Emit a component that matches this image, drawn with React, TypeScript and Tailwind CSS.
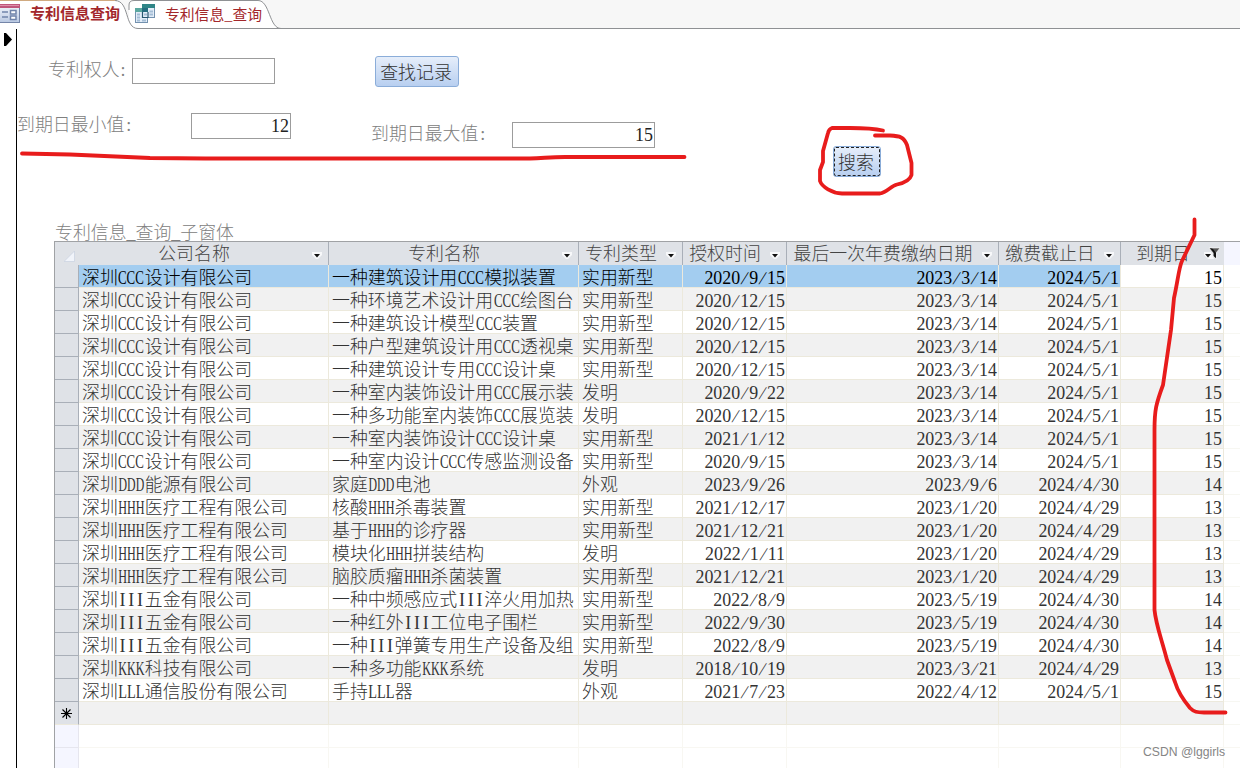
import React from "react";

const ROWS: string[][] = [
  ["深圳CCC设计有限公司", "一种建筑设计用CCC模拟装置", "实用新型", "2020/9/15", "2023/3/14", "2024/5/1", "15"],
  ["深圳CCC设计有限公司", "一种环境艺术设计用CCC绘图台", "实用新型", "2020/12/15", "2023/3/14", "2024/5/1", "15"],
  ["深圳CCC设计有限公司", "一种建筑设计模型CCC装置", "实用新型", "2020/12/15", "2023/3/14", "2024/5/1", "15"],
  ["深圳CCC设计有限公司", "一种户型建筑设计用CCC透视桌", "实用新型", "2020/12/15", "2023/3/14", "2024/5/1", "15"],
  ["深圳CCC设计有限公司", "一种建筑设计专用CCC设计桌", "实用新型", "2020/12/15", "2023/3/14", "2024/5/1", "15"],
  ["深圳CCC设计有限公司", "一种室内装饰设计用CCC展示装", "发明", "2020/9/22", "2023/3/14", "2024/5/1", "15"],
  ["深圳CCC设计有限公司", "一种多功能室内装饰CCC展览装", "发明", "2020/12/15", "2023/3/14", "2024/5/1", "15"],
  ["深圳CCC设计有限公司", "一种室内装饰设计CCC设计桌", "实用新型", "2021/1/12", "2023/3/14", "2024/5/1", "15"],
  ["深圳CCC设计有限公司", "一种室内设计CCC传感监测设备", "实用新型", "2020/9/15", "2023/3/14", "2024/5/1", "15"],
  ["深圳DDD能源有限公司", "家庭DDD电池", "外观", "2023/9/26", "2023/9/6", "2024/4/30", "14"],
  ["深圳HHH医疗工程有限公司", "核酸HHH杀毒装置", "实用新型", "2021/12/17", "2023/1/20", "2024/4/29", "13"],
  ["深圳HHH医疗工程有限公司", "基于HHH的诊疗器", "实用新型", "2021/12/21", "2023/1/20", "2024/4/29", "13"],
  ["深圳HHH医疗工程有限公司", "模块化HHH拼装结构", "发明", "2022/1/11", "2023/1/20", "2024/4/29", "13"],
  ["深圳HHH医疗工程有限公司", "脑胶质瘤HHH杀菌装置", "实用新型", "2021/12/21", "2023/1/20", "2024/4/29", "13"],
  ["深圳III五金有限公司", "一种中频感应式III淬火用加热", "实用新型", "2022/8/9", "2023/5/19", "2024/4/30", "14"],
  ["深圳III五金有限公司", "一种红外III工位电子围栏", "实用新型", "2022/9/30", "2023/5/19", "2024/4/30", "14"],
  ["深圳III五金有限公司", "一种III弹簧专用生产设备及组", "实用新型", "2022/8/9", "2023/5/19", "2024/4/30", "14"],
  ["深圳KKK科技有限公司", "一种多功能KKK系统", "发明", "2018/10/19", "2023/3/21", "2024/4/29", "13"],
  ["深圳LLL通信股份有限公司", "手持LLL器", "外观", "2021/7/23", "2022/4/12", "2024/5/1", "15"],
];

const HEADERS = ["公司名称", "专利名称", "专利类型", "授权时间", "最后一次年费缴纳日期", "缴费截止日", "到期日"];

const GRID = "grid grid-cols-[24px_250px_250px_104px_104px_212px_122px_103px_1fr]";

const CAPS: Record<string, string> = {
  C: "scale-x-[0.72]",
  D: "scale-x-[0.66]",
  H: "scale-x-[0.68]",
  I: "tracking-[2.8px] pl-[2.8px]",
  K: "scale-x-[0.68]",
  L: "scale-x-[0.8]",
};

/** Text in which half-width characters take exactly half an ideograph. */
function HalfWidth({ text }: { text: string }) {
  const parts = text.match(/[A-Z]+|\/|[^A-Z/]+/g) ?? [];
  return (
    <>
      {parts.map((p, i) => {
        if (/^[A-Z]/.test(p))
          return (
            <span key={i} className="inline-flex w-[27px] justify-center">
              <span className={`inline-block ${CAPS[p[0]]}`}>{p}</span>
            </span>
          );
        if (p === "/")
          return (
            <span key={i} className="inline-flex w-[9px] justify-center">
              <span className="inline-block -skew-x-[16deg]">/</span>
            </span>
          );
        return <React.Fragment key={i}>{p}</React.Fragment>;
      })}
    </>
  );
}

function Arrow() {
  return (
    <svg className="absolute right-[6px] top-[10px]" width="10" height="7" viewBox="0 0 10 7">
      <path d="M0 0H10V3L6 7H4L0 3Z" fill="#f7f8fa" />
      <path d="M2 2H8L5 5.5Z" fill="#111" />
    </svg>
  );
}

function FilterMark() {
  return (
    <svg className="absolute right-[3px] top-[5px]" width="17" height="13" viewBox="0 0 17 13">
      <path d="M0 5H7L10 12H4L0 8Z" fill="#f7f8fa" />
      <path d="M5 1H16L12 6V12L9 9V6Z" fill="#555" stroke="#fff" strokeWidth="0.6" />
      <path d="M6 1L10 6V9L12 11V6L9 2Z" fill="#111" />
      <path d="M1 7H7L4 10.500Z" fill="#111" />
    </svg>
  );
}

function FormIcon() {
  return (
    <svg width="20" height="20" viewBox="0 0 20 20" className="shrink-0">
      <defs>
        <linearGradient id="formBody" x1="0" y1="0" x2="0" y2="1">
          <stop offset="0" stopColor="#f4f7fc" />
          <stop offset="1" stopColor="#b9c8e2" />
        </linearGradient>
      </defs>
      <rect x="-4" y="0.5" width="23.5" height="18" fill="url(#formBody)" stroke="#7485a8" />
      <rect x="0" y="0" width="20" height="4" fill="#c0567c" />
      <rect x="0" y="1" width="19" height="1" fill="#dc8fac" />
      <path d="M2 8H8M2 13H8" stroke="#7084aa" strokeWidth="1.600" />
      <path d="M10.500 6.500H16V10H10.500ZM10.500 12H16V15.500H10.500Z" fill="#fff" stroke="#7084aa" strokeWidth="1.500" />
    </svg>
  );
}

function QueryIcon() {
  return (
    <svg width="20" height="20" viewBox="0 0 20 20" className="shrink-0">
      <rect x="7.500" y="0.500" width="12" height="13" fill="#e3edf8" stroke="#7391ae" />
      <rect x="7" y="0" width="13" height="4" fill="#2f8587" />
      <path d="M14.500 7.500H18M14.500 10.500H18" stroke="#a4bdd5" strokeWidth="2" />
      <rect x="0.500" y="4.500" width="12" height="14" fill="#e3edf8" stroke="#7391ae" />
      <rect x="0" y="4" width="13" height="4" fill="#5ba8a0" />
      <path d="M2 10.500H5M2 13.500H5M2 16.500H5M7 16.500H11" stroke="#a4bdd5" strokeWidth="2" />
      <path d="M7 4H13V8H7Z" fill="#276e80" />
      <path d="M7.500 8V13.500H13V8" fill="#e6f0fa" stroke="#28566f" strokeWidth="1.200" />
      <path d="M9 10.500H12" stroke="#a4bdd5" strokeWidth="2" />
    </svg>
  );
}

function TabBar() {
  return (
    <div className="relative flex h-[29px] shrink-0 bg-[#f7f7f7]">
      <svg className="absolute left-0 top-0" width="1240" height="29" viewBox="0 0 1240 29">
        <path d="M129 29V5Q129 .5 134 .5H258C270 .5 269 27 281 28.500V29Z" fill="#fff" />
        <path d="M129 10V5Q129 .5 134 .5H258C270 .5 269 28.500 281 28.500H1240" fill="none" stroke="#8f9194" />
        <path d="M0 0H115C128 1 125 27 138 28.500V29H0Z" fill="#fff" />
        <path d="M0 .5H117" stroke="#d0aa80" />
        <path d="M115 .5C130 1 124 28.500 138 28.500H281" fill="none" stroke="#8f9194" />
      </svg>
      <div className="relative flex w-[135px] pt-[4px]">
        <FormIcon />
        <span className="ml-[10px] -mt-px text-[15px] font-bold leading-[20px] text-[#a3272b]">专利信息查询</span>
      </div>
      <div className="relative flex pt-[4px]">
        <QueryIcon />
        <span className="ml-[10px] text-[14.800px] leading-[20px] text-[#a3272b]">专利信息_查询</span>
      </div>
    </div>
  );
}

const LABEL = "whitespace-nowrap leading-[25px] text-[#808080]";
const BOX = "h-[26px] border border-[#9c9c9c] bg-white pr-px text-right leading-[25px] text-[#222]";
const BUTTON = "flex h-[31px] items-center justify-center rounded-[3px] border border-[#8badd9] bg-linear-to-b from-[#e6eefa] to-[#b8cff0] pr-[2px] pt-[3px] text-[#333]";

function SearchForm() {
  return (
    <div>
      <div className="flex h-[84px] pl-[31px] pt-[26px]">
        <div className={`mt-[3px] w-[84px] ${LABEL}`}>专利权人<span className="pl-px">:</span></div>
        <div className={`mt-[3px] w-[143px] ${BOX}`} />
        <button className={`ml-[100px] mt-px w-[84px] ${BUTTON}`}>查找记录</button>
      </div>
      <div className="flex h-[108px]">
        <div className={`w-[174px] ${LABEL}`}>到期日最小值<span className="pl-[2px]">:</span></div>
        <div className={`w-[100px] ${BOX}`}>12</div>
        <div className={`ml-[80px] mt-[9px] w-[141px] ${LABEL}`}>到期日最大值<span className="pl-[2px]">:</span></div>
        <div className={`mt-[9px] w-[143px] ${BOX}`}>15</div>
        <button className={`relative ml-[178px] mt-[33px] w-[48px] ${BUTTON}`}>
          搜索
          <span className="absolute inset-0 rounded-[2px] border border-dashed border-[#222]" />
        </button>
      </div>
    </div>
  );
}

function HeaderRow() {
  return (
    <div className={`${GRID} h-[24px] grid-rows-[23px] border-t border-[#a0a2a5] bg-[#f5f6ff] text-[#444]`}>
      <div className="flex items-end justify-end bg-[#dfe2e7] pb-[3px] pr-[4px]">
        <svg width="11" height="11" viewBox="0 0 11 11">
          <path d="M0 10.500L10.500 0V10.500Z" fill="#f1f4fa" stroke="#c9d1df" strokeWidth="0.700" />
        </svg>
      </div>
      {HEADERS.map((h, i) => (
        <div
          key={h}
          className={`relative bg-[#dfe2e7] pr-[19px] text-center leading-[25px] ${i < 6 ? "border-r border-[#a9afb8]" : ""}`}
        >
          {h}
          {i < 6 ? <Arrow /> : <FilterMark />}
        </div>
      ))}
    </div>
  );
}

function DataRow({ row, index }: { row: string[]; index: number }) {
  const base = index % 2 ? "bg-[#f1f1f1]" : "bg-white";
  return (
    <div className={`${GRID} h-[23px] grid-rows-[23px] ${index === 0 ? "text-black" : "text-[#333]"}`}>
      <div className="border-b border-r border-[#a9afb8] bg-[#dfe2e7]" />
      {row.map((cell, i) => (
        <div
          key={i}
          className={`overflow-hidden whitespace-nowrap border-b border-r border-[#ece9dc] leading-[27px] ${
            index === 0 && i < 6 ? "bg-[#a3cdf0]" : base
          } ${i < 3 ? "pl-[3px]" : "pr-px text-right"}`}
        >
          <HalfWidth text={cell} />
        </div>
      ))}
      <div className="border-b border-[#f7f7f2]" />
    </div>
  );
}

function NewRow() {
  return (
    <div className={`${GRID} h-[23px]`}>
      <div className="flex items-center justify-center border-b border-r border-b-[#ece9dc] border-r-[#a9afb8] bg-[#dfe2e7]">
        <svg width="11" height="11" viewBox="0 0 11 11">
          <path d="M5.500 0V11M0 5.500H11M1.500 1.500L9.500 9.500M9.500 1.500L1.500 9.500" stroke="#000" strokeWidth="1.100" />
        </svg>
      </div>
      {HEADERS.map((h) => (
        <div key={h} className="border-b border-r border-[#ece9dc] bg-[#f1f1f1]" />
      ))}
      <div className="border-b border-[#f7f7f2]" />
    </div>
  );
}

function EmptyRow() {
  return (
    <div className={`${GRID} h-[23px]`}>
      <div className="border-b border-r border-[#e6e6ee] bg-[#f5f6ff]" />
      {HEADERS.map((h) => (
        <div key={h} className="border-b border-r border-[#f8f7f2]" />
      ))}
      <div className="border-b border-[#f8f7f2]" />
    </div>
  );
}

export default function App() {
  return (
    <div className="relative flex h-[768px] w-[1240px] flex-col overflow-hidden bg-white font-['Liberation_Serif','Noto_Sans_CJK_SC',serif] text-[17.9px] font-light">
      <div className="font-['Noto_Sans_CJK_SC',sans-serif] font-normal">
        <TabBar />
      </div>
      <div className="flex min-h-0 grow">
        <div className="w-[17px] shrink-0 border-r border-black pl-[4px] pt-[4px]">
          <svg width="8" height="14" viewBox="0 0 8 14">
            <path d="M0 0H2L8 6.500L2 13H0Z" fill="#000" />
          </svg>
        </div>
        <div className="min-w-0 grow">
          <SearchForm />
          <div className="pl-[37px]">
            <div className="h-[20px] pl-px leading-[25px] text-[#808080]">专利信息_查询_子窗体</div>
            <div className="border-l border-[#a0a2a5]">
              <HeaderRow />
              {ROWS.map((row, i) => (
                <DataRow key={i} row={row} index={i} />
              ))}
              <NewRow />
              <EmptyRow />
              <EmptyRow />
            </div>
          </div>
        </div>
      </div>
      <svg className="pointer-events-none absolute inset-0" width="1240" height="768" viewBox="0 0 1240 768">
        <g fill="none" stroke="#e81c1c" strokeWidth="3.800" strokeLinecap="round" strokeLinejoin="round">
          <path d="M22 153.500L70 154.500L150 158L205 158.500H530C545 158 550 157 565 157H684.500" />
          <path d="M883 130.500C872 128 860 128 850 128H832Q829 129 828 133L823 151V162L820 170V181C822 187 832 193 842 193.500H880C887 192 891 186 897 184.500C904 183 910 180 911.500 175V163L907 145C904 137 900 136 890 135.500H875" />
          <path d="M1194.500 219.500V235L1182 261C1179 267 1178 280 1174 298L1171 330L1163 385C1156 404 1154.500 410 1154.500 430V610C1156 625 1161 637 1167 660L1175 682C1178 692 1185 702 1190 708C1194 712 1197 712.500 1204 712.500H1225.500" />
        </g>
      </svg>
      <div className="absolute left-[1143px] top-[744px] whitespace-nowrap font-['Liberation_Sans',sans-serif] text-[12.200px] font-normal leading-[16px] text-[#858585]">
        CSDN @lggirls
      </div>
    </div>
  );
}
